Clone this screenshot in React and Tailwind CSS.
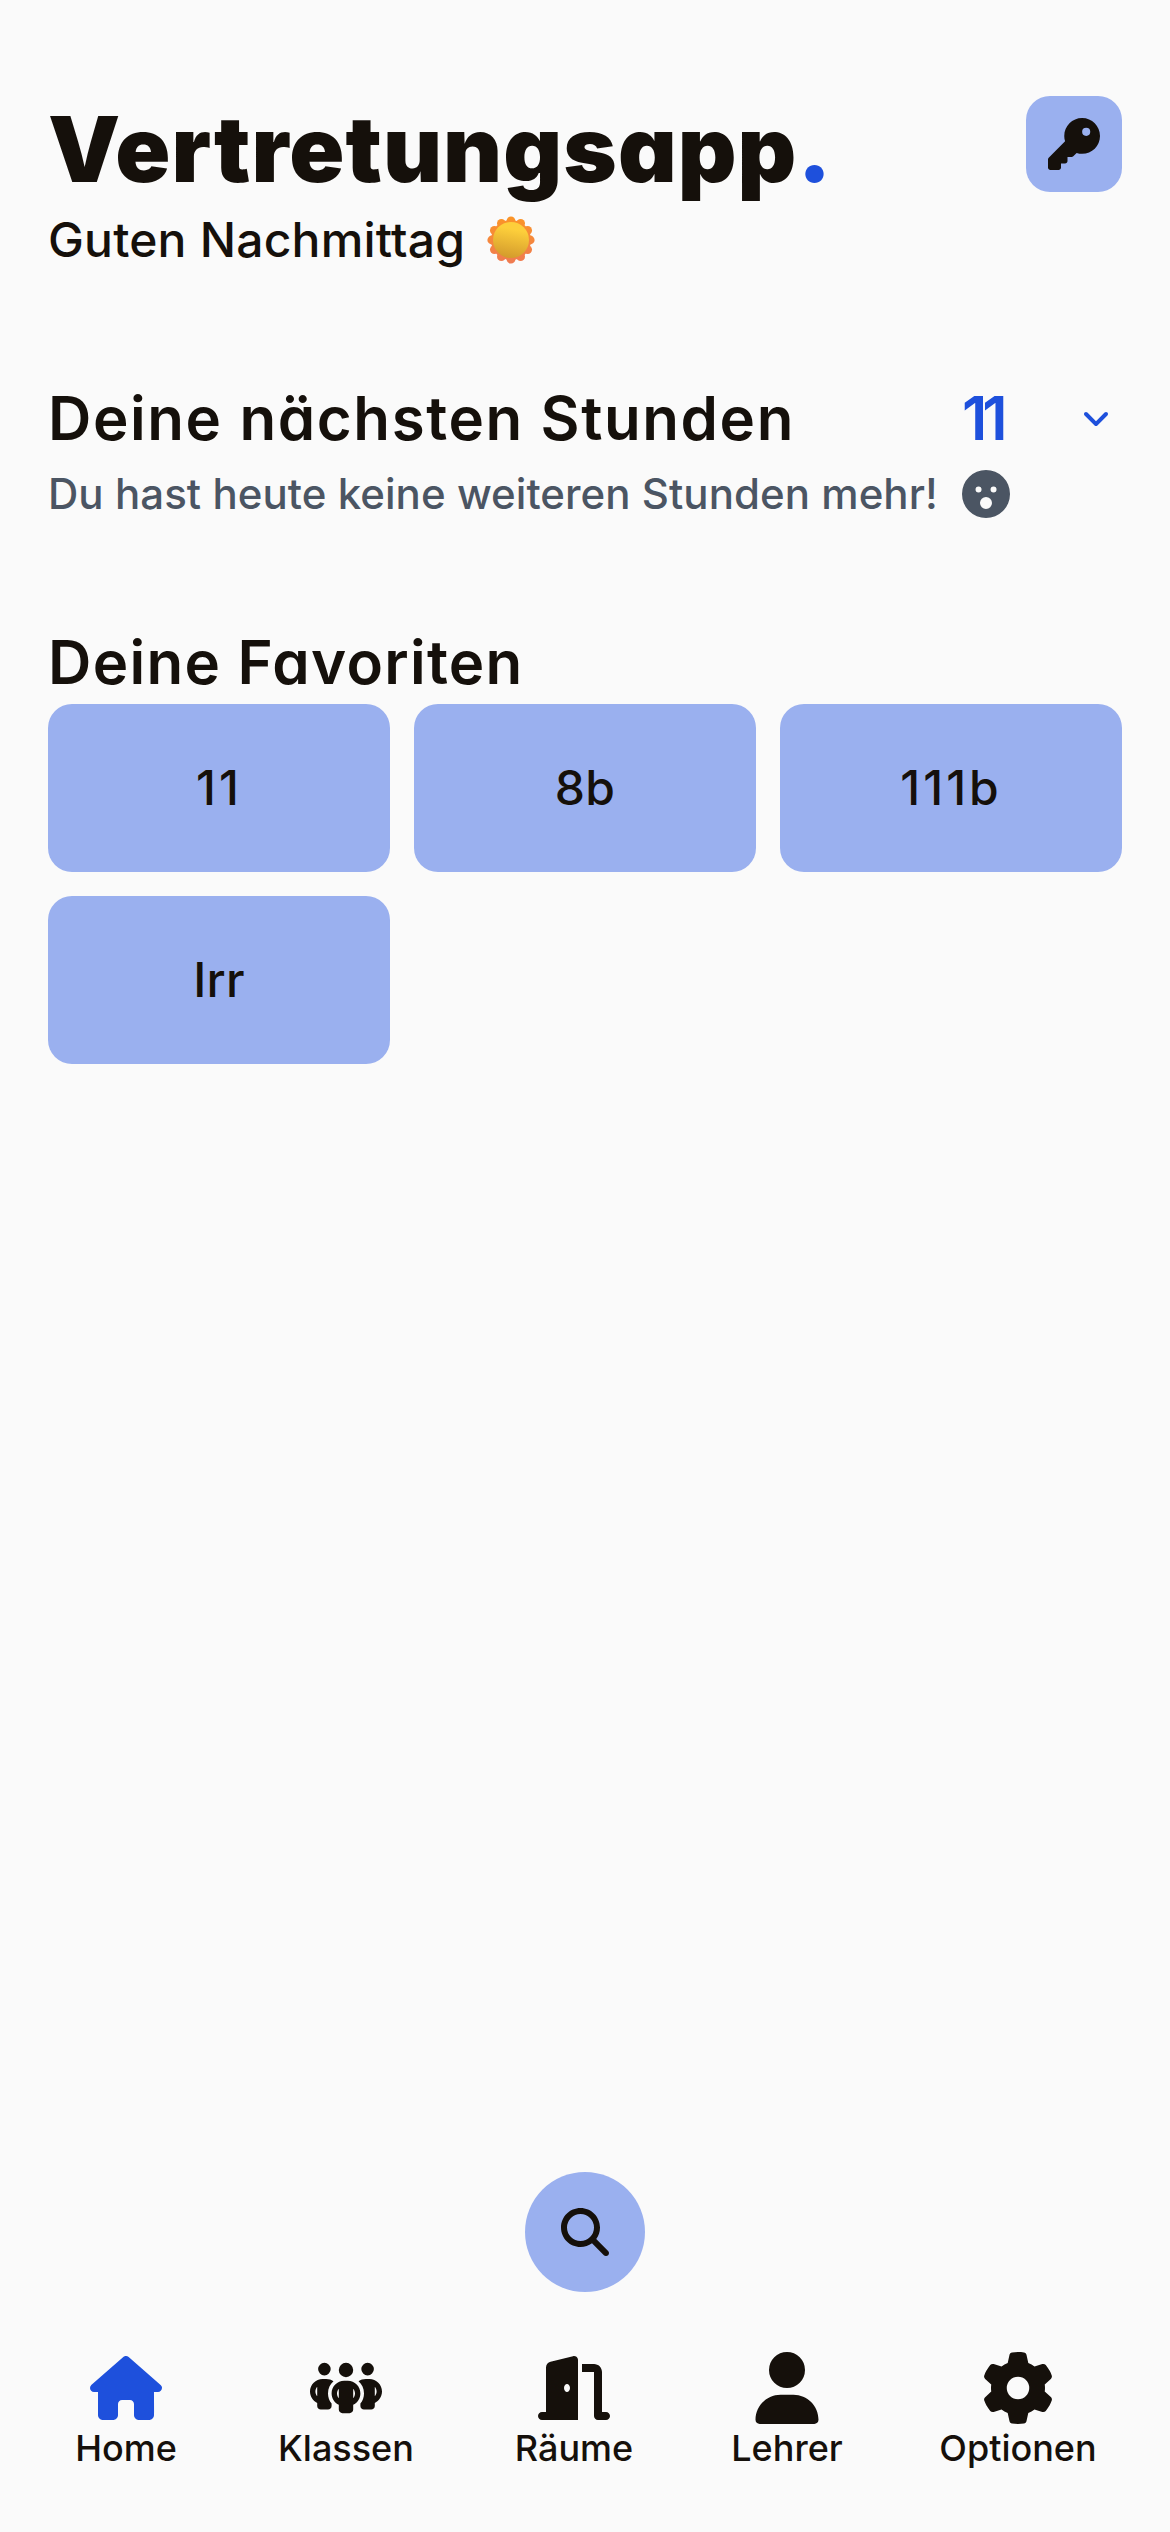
import { FaKey, FaFaceSurprise, FaAngleDown, FaMagnifyingGlass, FaHouse, FaPeopleGroup, FaDoorOpen, FaUser, FaGear } from "react-icons/fa6";

const favorites = [
  { name: "11", spacing: "tracking-[3px]" },
  { name: "8b", spacing: "tracking-[0.3px]" },
  { name: "111b", spacing: "tracking-[3px]" },
  { name: "Irr", spacing: "tracking-[0.3px]" },
];

const tabs = [
  { label: "Home", Icon: FaHouse, active: true, width: "w-[204px]" },
  { label: "Klassen", Icon: FaPeopleGroup, width: "w-[236px]" },
  { label: "Räume", Icon: FaDoorOpen, width: "w-[220px]" },
  { label: "Lehrer", Icon: FaUser, width: "w-[206px]" },
  { label: "Optionen", Icon: FaGear, width: "w-[256px]" },
];

function Sun() {
  const petals = Array.from({ length: 12 }, (_, i) => (i * Math.PI) / 6);
  return (
    <svg viewBox="0 0 48 48" className="h-12 w-12">
      <defs>
        <linearGradient id="sunFace" x1="0.6" y1="0" x2="0.4" y2="1">
          <stop offset="0.2" stopColor="#fdcf3b" />
          <stop offset="1" stopColor="#d39a2c" />
        </linearGradient>
        <linearGradient id="sunRay" x1="0" y1="0" x2="0" y2="48" gradientUnits="userSpaceOnUse">
          <stop offset="0" stopColor="#fb9526" />
          <stop offset="1" stopColor="#ef7a52" />
        </linearGradient>
      </defs>
      <g fill="url(#sunRay)">
        <circle cx="24" cy="24" r="20" />
        {petals.map((a) => (
          <circle key={a} cx={24 + 19.2 * Math.sin(a)} cy={24 - 19.2 * Math.cos(a)} r="4.4" />
        ))}
      </g>
      <circle cx="24" cy="24" r="18" fill="url(#sunFace)" />
    </svg>
  );
}

export default function App() {
  return (
    <div className="flex h-[2532px] w-[1170px] flex-col bg-[#fafafa] font-['Inter',sans-serif] text-[#15100b]">
      <header className="flex items-start justify-between px-12 pt-24">
        <div>
          <h1 className="h-[108px] text-[91px] leading-[106px] font-black tracking-[1.1px] whitespace-nowrap [font-feature-settings:'cv11']">
            Vertretungsapp<span className="text-[#1e50dc]">.</span>
          </h1>
          <p className="flex h-[72px] items-center gap-[22px] text-[48px] leading-[72px] font-medium tracking-[0.2px]">
            Guten Nachmittag <Sun />
          </p>
        </div>
        <button className="flex h-24 w-24 items-center justify-center rounded-3xl bg-[#9ab0ef]">
          <FaKey className="h-[52px] w-[52px]" />
        </button>
      </header>

      <section className="mt-[102px] px-12">
        <div className="flex h-20 items-center">
          <h2 className="w-[914px] text-[60px] leading-[80px] font-semibold tracking-[1.6px] whitespace-nowrap [font-feature-settings:'cv11']">
            Deine nächsten Stunden
          </h2>
          <span className="w-[120px] text-[60px] leading-[80px] font-semibold tracking-[-5px] text-[#1e50dc]">11</span>
          <FaAngleDown className="h-8 w-7 text-[#1e50dc]" />
        </div>
        <p className="flex h-[72px] items-center gap-6 text-[42px] leading-[72px] font-medium tracking-[0.05px] text-[#4b5563]">
          Du hast heute keine weiteren Stunden mehr! <FaFaceSurprise className="h-12 w-12" />
        </p>
      </section>

      <section className="mt-[92px] px-12">
        <h2 className="h-[82px] text-[60px] leading-[80px] font-semibold tracking-[1.3px] whitespace-nowrap [font-feature-settings:'cv11']">
          Deine Favoriten
        </h2>
        <div className="grid grid-cols-3 gap-6">
          {favorites.map(({ name, spacing }) => (
            <button key={name} className={`h-[168px] rounded-3xl bg-[#9ab0ef] text-[48px] font-medium ${spacing}`}>
              {name}
            </button>
          ))}
        </div>
      </section>

      <footer className="mt-auto flex h-[360px] flex-col items-center">
        <button className="flex h-[120px] w-[120px] items-center justify-center rounded-full bg-[#9ab0ef]">
          <FaMagnifyingGlass className="h-12 w-12" />
        </button>
        <nav className="mt-[60px] flex w-full px-6">
          {tabs.map(({ label, Icon, active, width }) => (
            <div key={label} className={`flex flex-col items-center ${width}`}>
              <Icon className={active ? "h-[72px] w-[72px] text-[#1e50dc]" : "h-[72px] w-[72px]"} />
              <span className="text-[36px] leading-[48px] font-medium">{label}</span>
            </div>
          ))}
        </nav>
      </footer>
    </div>
  );
}
